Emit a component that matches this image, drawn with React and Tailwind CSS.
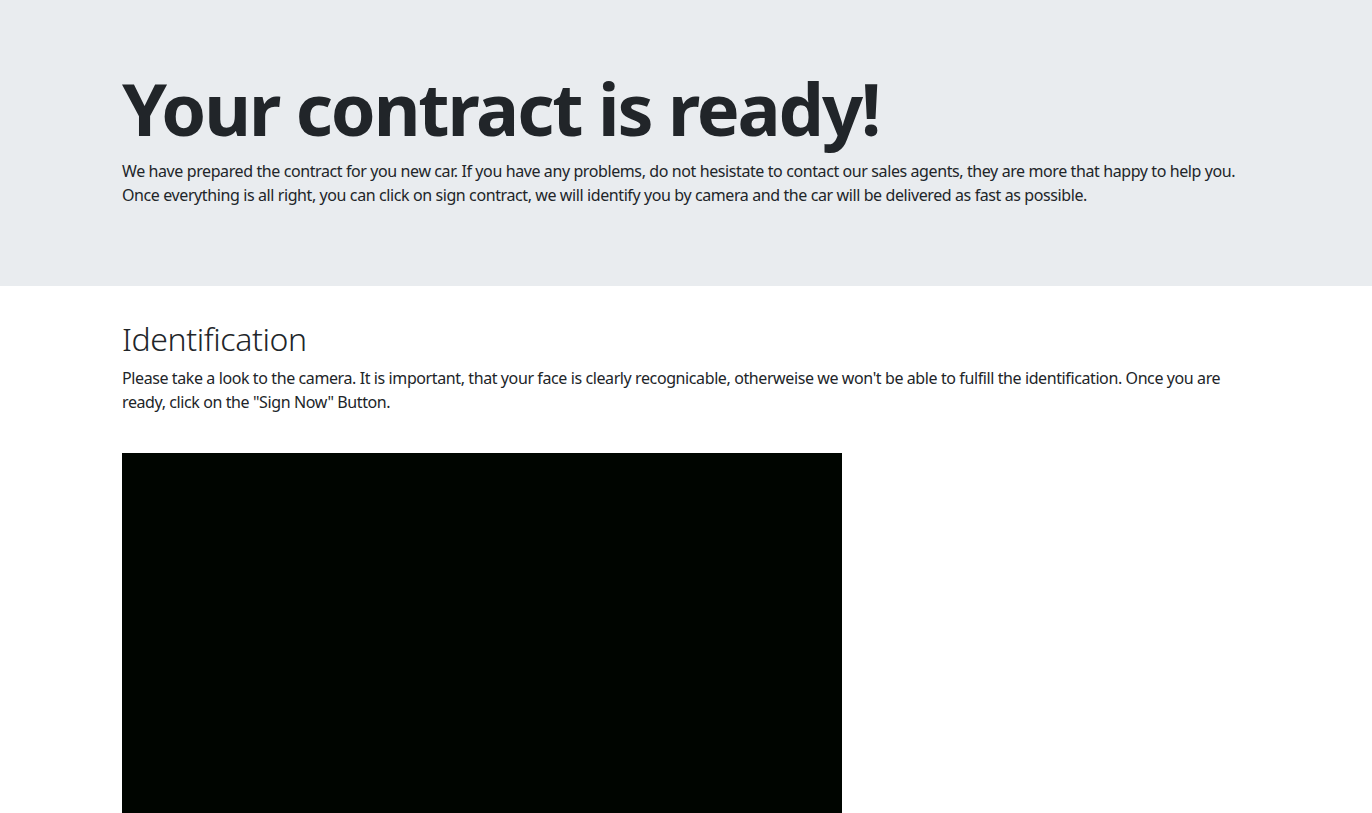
export default function App() {
  return (
    <div className="min-h-screen bg-white text-[#212529]" style={{ fontFamily: '"Noto Sans", "Open Sans", sans-serif' }}>
      <div className="bg-[#e9ecef] pt-[65px] pb-[63px] mb-[34px]">
        <div className="mx-auto w-[1120px] -translate-x-[4px]">
          <h1 className="text-[72px] font-bold leading-[1.2] mb-2 tracking-[-2.1px]">Your contract is ready!</h1>
          <p className="text-[16px] leading-6 mb-4 tracking-[-0.4px]">
            We have prepared the contract for you new car. If you have any problems, do not hesistate to contact our sales agents, they are more that happy to help you.
            <br />
            Once everything is all right, you can click on sign contract, we will identify you by camera and the car will be delivered as fast as possible.
          </p>
        </div>
      </div>
      <div className="mx-auto w-[1120px] -translate-x-[4px]">
        <h2 className="text-[32px] font-light leading-[1.2] mb-[7px] tracking-[-0.4px]">Identification</h2>
        <p className="text-[16px] leading-6 mb-4 tracking-[-0.4px] w-[1110px]">
          Please take a look to the camera. It is important, that your face is clearly recognicable, otherweise we won't be able to fulfill the identification. Once you are ready, click on the "Sign Now" Button.
        </p>
        <div className="mt-[39px] w-[720px] h-[540px] bg-[#000500]" />
      </div>
    </div>
  );
}
